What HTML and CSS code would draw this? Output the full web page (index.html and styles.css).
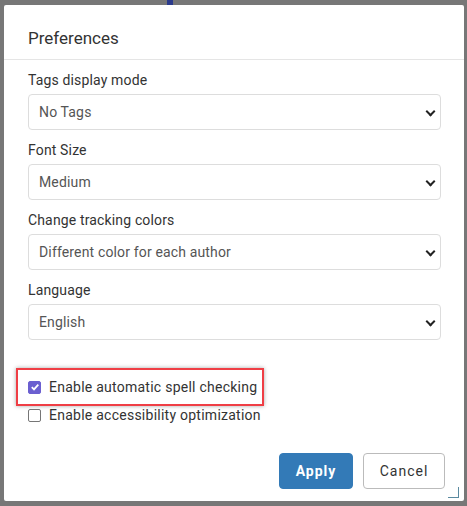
FILE: index.html
```html
<!DOCTYPE html>
<html lang="en">
<head>
    <meta charset="UTF-8">
    <meta name="viewport" content="width=device-width, initial-scale=1.0">
    <title>Preferences</title>
    <link rel="stylesheet" href="styles.css">
</head>
<body>

<div class="backdrop">
    <span class="bg-mark"></span>
    <div class="dialog">
        <div class="dialog-header">
            <h1>Preferences</h1>
        </div>

        <!-- Form preferensi -->
        <div class="dialog-body">
            <div class="field">
                <label>Tags display mode</label>
                <div class="select">No Tags<span class="caret"></span></div>
            </div>
            <div class="field">
                <label>Font Size</label>
                <div class="select">Medium<span class="caret"></span></div>
            </div>
            <div class="field">
                <label>Change tracking colors</label>
                <div class="select">Different color for each author<span class="caret"></span></div>
            </div>
            <div class="field">
                <label>Language</label>
                <div class="select">English<span class="caret"></span></div>
            </div>

            <div class="checks">
                <div class="highlight">
                    <div class="check">
                        <span class="box checked">
                            <svg width="10" height="10" viewBox="0 0 10 10"><path d="M1.8 5.2 L4 7.4 L8.3 2.6" fill="none" stroke="#fff" stroke-width="1.8"/></svg>
                        </span>
                        Enable automatic spell checking
                    </div>
                </div>
                <div class="check plain">
                    <span class="box"></span>
                    Enable accessibility optimization
                </div>
            </div>
        </div>

        <div class="dialog-footer">
            <button class="btn primary">Apply</button>
            <button class="btn">Cancel</button>
        </div>
        <span class="resize"></span>
    </div>
</div>

</body>
</html>
```

FILE: styles.css
```css
* {
    margin: 0;
    padding: 0;
    box-sizing: border-box;
}

body {
    font-family: Roboto, 'Liberation Sans', sans-serif;
    background: #777;
    width: 467px;
    height: 506px;
    overflow: hidden;
}

.backdrop {
    position: relative;
    padding: 5px 3px 5px 4px;
    height: 506px;
}

.bg-mark {
    position: absolute;
    left: 167px;
    top: 0;
    width: 6px;
    height: 5px;
    background: #2b3a8c;
}

.dialog {
    position: relative;
    background: #fff;
    height: 496px;
    border-radius: 2px;
    display: flex;
    flex-direction: column;
}

.dialog-header {
    height: 55px;
    border-bottom: 1px solid #e5e5e5;
    padding: 23px 24px 0;
}

.dialog-header h1 {
    font-size: 17px;
    font-weight: 400;
    color: #333;
    line-height: 20px;
}

.dialog-body {
    padding: 10px 23px 0 24px;
}

.field {
    margin-bottom: 10px;
}

.field label {
    display: block;
    font-size: 14px;
    color: #333;
    line-height: 20px;
    letter-spacing: 0.15px;
    margin-bottom: 4px;
}

.select {
    position: relative;
    height: 36px;
    border: 1px solid #ddd;
    border-radius: 4px;
    padding: 0 10px;
    font-size: 14px;
    color: #555;
    line-height: 34px;
    letter-spacing: 0.15px;
}

.caret {
    position: absolute;
    right: 6px;
    top: 13px;
    width: 7px;
    height: 7px;
    border-right: 2px solid #222;
    border-bottom: 2px solid #222;
    transform: rotate(45deg);
}

.checks {
    margin-top: 28px;
}

.highlight {
    margin-left: -12px;
    width: 248px;
    height: 38px;
    border: 2px solid #ef3e45;
    box-shadow: 0 0 4px rgba(0, 0, 0, 0.35);
    padding: 0 0 0 10px;
    display: flex;
    align-items: center;
}

.check {
    display: flex;
    align-items: center;
    gap: 8px;
    font-size: 14px;
    color: #333;
    line-height: 20px;
    letter-spacing: 0.25px;
}

.check.plain {
    margin-top: -1px;
}

.box {
    width: 13px;
    height: 13px;
    border: 1px solid #767676;
    border-radius: 2px;
    display: flex;
    align-items: center;
    justify-content: center;
    background: #fff;
}

.box.checked {
    background: #6b5fd0;
    border-color: #6b5fd0;
}

.dialog-footer {
    margin-top: auto;
    display: flex;
    justify-content: flex-end;
    gap: 10px;
    padding: 0 19px 12px 0;
}

.btn {
    height: 36px;
    padding: 0 14px;
    border: 1px solid #bbb;
    border-radius: 4px;
    background: #fff;
    color: #333;
    font-family: inherit;
    font-size: 14px;
    letter-spacing: 1px;
    min-width: 82px;
}

.btn.primary {
    background: #337ab7;
    border-color: #337ab7;
    color: #fff;
    font-weight: 700;
    min-width: 74px;
}

.resize {
    position: absolute;
    right: 5px;
    bottom: 3px;
    width: 11px;
    height: 11px;
    border-right: 1px solid #5a8aa0;
    border-bottom: 1px solid #5a8aa0;
}
```
